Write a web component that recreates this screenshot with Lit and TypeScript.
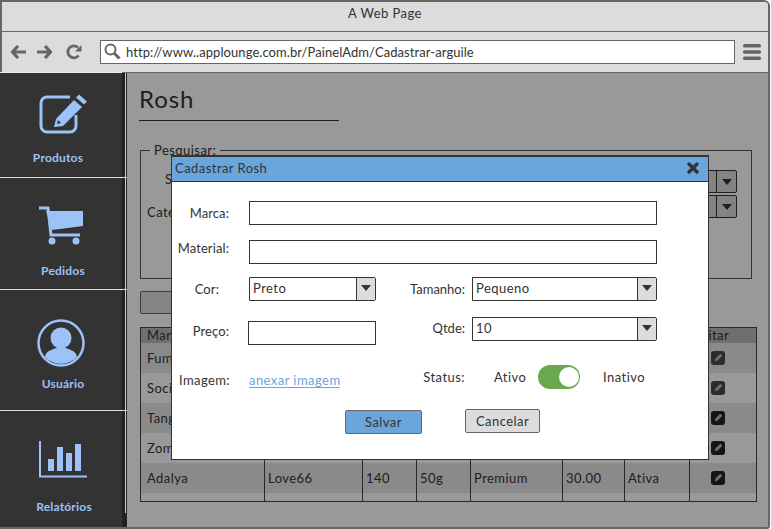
import { LitElement, css, html, svg } from 'lit';
import { customElement } from 'lit/decorators.js';

const pencilBadge = svg`<rect width="14" height="14" rx="3" fill="currentColor"/><path d="M9.300 2.800l2 2-4.800 4.800-2.700.7.700-2.700z" fill="#bbb"/>`;

const rows = [
  { marca: 'Fumari', essencia: 'Blue Mist', peso: '100', qtd: '50g', tipo: 'Premium', preco: '45.00', status: 'Ativa', soft: true, shade: true },
  { marca: 'Social Smoke', essencia: 'Lemon', peso: '100', qtd: '50g', tipo: 'Premium', preco: '40.00', status: 'Ativa', soft: true, shade: false },
  { marca: 'Tangiers', essencia: 'Cane Mint', peso: '250', qtd: '50g', tipo: 'Premium', preco: '50.00', status: 'Ativa', soft: false, shade: true },
  { marca: 'Zomo', essencia: 'Strong Mint', peso: '50', qtd: '50g', tipo: 'Nacional', preco: '15.00', status: 'Ativa', soft: false, shade: false },
  { marca: 'Adalya', essencia: 'Love66', peso: '140', qtd: '50g', tipo: 'Premium', preco: '30.00', status: 'Ativa', soft: false, shade: true },
];

@customElement('app-root')
export class AppRoot extends LitElement {
  static styles = css`
    :host {
      display: block;
      width: 771px;
      height: 529px;
      overflow: hidden;
      background: #fff;
      font-family: Lato, "Open Sans", sans-serif;
      font-size: 13px;
      letter-spacing: 0.45px;
      color: #333;
    }

    .window {
      position: relative;
      box-sizing: border-box;
      width: 770px;
      height: 529px;
      border: 2px solid #666;
      border-left: 0;
      border-radius: 0 6px 3px 0;
      display: flex;
      flex-direction: column;
      overflow: hidden;
    }

    .title {
      height: 30px;
      flex: none;
      box-sizing: border-box;
      background: #dcdcdc;
      border-bottom: 1px solid #666;
      border-left: 2px solid #666;
      display: flex;
      align-items: center;
      justify-content: center;
      padding-bottom: 7px;
    }

    .toolbar {
      height: 41px;
      flex: none;
      box-sizing: border-box;
      background: #dcdcdc;
      border-bottom: 1px solid #666;
      border-left: 2px solid #666;
      display: flex;
      align-items: center;
      padding: 0 7px 1px 9px;
    }
    .toolbar svg { display: block; color: #666; }
    .nav { display: flex; gap: 9px; align-items: center; }
    .reload { margin-left: 14px; }
    .url {
      margin-left: 18px;
      width: 635px;
      height: 24px;
      box-sizing: border-box;
      background: #fff;
      border: 1px solid #666;
      display: flex;
      align-items: center;
      gap: 5px;
      padding: 0 3px;
      white-space: nowrap;
      letter-spacing: 0.07px;
    }
    .menu { margin-left: 8px; }

    .body {
      position: relative;
      flex: 1;
      display: flex;
      min-height: 0;
    }

    .side {
      position: relative;
      width: 127px;
      flex: none;
      background: linear-gradient(to right, #333 122px, #222 122px);
      color: #9cc2f7;
      display: flex;
      flex-direction: column;
      font-weight: 700;
      font-size: 12px;
      letter-spacing: 0.2px;
    }
    .side::before {
      content: "";
      position: absolute;
      left: 0;
      top: -1px;
      width: 122px;
      height: 1px;
      background: #eee;
    }
    .side::after {
      content: "";
      position: absolute;
      left: 125px;
      top: 0;
      width: 1px;
      height: 440px;
      background: #ccc;
    }
    .item {
      box-sizing: border-box;
      border-bottom: 1px solid #ddd;
      display: flex;
      flex-direction: column;
      align-items: flex-start;
    }
    .item span { width: 122px; text-align: center; }
    .item svg { display: block; }
    .produtos { height: 105px; padding: 21px 0 0 39px; }
    .produtos span { margin: 16px 0 0 -42px; }
    .pedidos { height: 112px; padding: 28px 0 0 38px; }
    .pedidos span { margin: 17px 0 0 -36px; }
    .usuario { height: 121px; padding: 29px 0 0 37px; }
    .usuario span { margin: 9px 0 0 -35px; }
    .relatorios { flex: 1; border-bottom: 0; padding: 30px 0 0 39px; }
    .relatorios span { margin: 21px 0 0 -36px; }

    .main {
      position: relative;
      flex: 1;
      background: #fff;
      padding: 11px 11px 0 12px;
    }
    .main h1 {
      margin: 0;
      width: 200px;
      height: 36px;
      border-bottom: 1px solid #333;
      font-size: 24px;
      font-weight: 400;
      line-height: 29px;
      letter-spacing: 0.9px;
    }

    fieldset {
      margin: 23px 5px 0 1px;
      padding: 0 0 0 6px;
      height: 135px;
      box-sizing: border-box;
      border: 1px solid #555;
      position: relative;
    }
    legend { padding: 0 4px; margin-left: 3px; line-height: 13px; margin-top: -1px; }
    .filter { display: flex; align-items: center; height: 25px; }
    .filter.first { margin-top: 12px; padding-left: 18px; }
    .filter.first .name { margin-bottom: 5px; }
    .filter.second .name { margin-top: 11px; }
    .filter .grow { flex: 1; }
    .stub {
      width: 29px;
      height: 23px;
      margin-right: 14px;
      box-sizing: border-box;
      border: 1px solid #333;
      border-radius: 0 2px 2px 0;
      background: #dcdcdc;
      display: flex;
      justify-content: flex-end;
    }
    .stub i {
      width: 19px;
      border-left: 1px solid #333;
      display: flex;
      align-items: center;
      justify-content: center;
    }
    .caret {
      width: 0;
      height: 0;
      border: 5px solid transparent;
      border-top: 6px solid #333;
      border-bottom: 0;
    }

    .strip {
      width: 160px;
      height: 23px;
      margin: 12px 0 0 1px;
      box-sizing: border-box;
      background: #dcdcdc;
      border: 1px solid #666;
      border-radius: 2px;
    }

    .table {
      margin: 13px 0 0 1px;
      width: 617px;
      box-sizing: border-box;
      border: 1px solid #444;
    }
    .head {
      display: flex;
      height: 15px;
      background: #b9b9b9;
      align-items: center;
      line-height: 15px;
    }
    .tr { display: flex; height: 30px; align-items: center; }
    .tr.shade { background: #e6e6e6; }
    .cell {
      box-sizing: border-box;
      height: 100%;
      padding-left: 3px;
      border-left: 1px solid #444;
      display: flex;
      align-items: center;
      white-space: nowrap;
      overflow: hidden;
    }
    .head .cell { border-left: 0; }
    .cell:first-child { border-left: 0; padding-left: 6px; }
    .head .edit { padding-left: 4px; }
    .tr .edit { padding-left: 21px; }
    .edit svg { display: block; color: #222; }
    .edit.soft svg { color: #4a4a4a; }
    .tail { display: flex; height: 8px; }
    .c1 { width: 123px; }
    .c2 { width: 98px; }
    .c3 { width: 54px; }
    .c4 { width: 54px; }
    .c5 { width: 92px; }
    .c6 { width: 62px; }
    .c7 { width: 65px; }
    .c8 { flex: 1; }

    .dim {
      position: absolute;
      inset: 0;
      background: rgba(0, 0, 0, 0.4);
    }

    .modal {
      position: absolute;
      left: 171px;
      top: 82px;
      width: 538px;
      height: 305px;
      box-sizing: border-box;
      background: #fff;
      border: 1px solid #333;
      border-top-width: 2px;
    }
    .bar {
      height: 25px;
      box-sizing: border-box;
      background: #6aa5dc;
      border-bottom: 1px solid #333;
      display: flex;
      align-items: center;
      justify-content: space-between;
      padding: 0 9px 2px 3px;
    }
    .bar svg { display: block; color: #333; }

    .row { display: flex; align-items: center; height: 24px; }
    .r1 { margin-top: 19px; }
    .r2 { margin-top: 15px; }
    .r3 { margin-top: 13px; }
    .r4 { margin-top: 16px; height: 28px; align-items: flex-start; }
    .r5 { margin-top: 20px; }
    .r6 { margin-top: 20px; height: 25px; }

    .lab, .rlab { letter-spacing: 0.1px; white-space: nowrap; }
    .lab { width: 77px; box-sizing: border-box; text-align: right; padding-right: 20px; }
    .lab.up { margin-top: -8px; }
    .lab.cor { padding-right: 30px; }
    .lab.preco { width: 76px; padding-right: 19px; margin-top: 6px; }
    .lab.imagem { padding-right: 19px; margin-top: 6px; letter-spacing: 0.4px; }

    .input {
      box-sizing: border-box;
      height: 24px;
      border: 1px solid #333;
      background: #fff;
    }
    .wide { width: 408px; }
    .price { width: 128px; margin-top: 4px; }

    .select {
      box-sizing: border-box;
      height: 24px;
      border: 1px solid #333;
      border-radius: 0 2px 2px 0;
      background: #fff;
      display: flex;
      align-items: center;
      justify-content: space-between;
      padding-left: 3px;
    }
    .select span:first-child { margin-top: -2px; }
    .select i {
      width: 19px;
      height: 100%;
      box-sizing: border-box;
      background: #dcdcdc;
      border-left: 1px solid #333;
      display: flex;
      align-items: center;
      justify-content: center;
    }
    .s-cor { width: 127px; }
    .s-big { width: 185px; }

    .rlab { width: 96px; box-sizing: border-box; text-align: right; padding-right: 7px; letter-spacing: 0; }
    .rlab.qtde { margin-top: 3px; }

    .link {
      width: 91px;
      flex: none;
      white-space: nowrap;
      margin-top: 6px;
      color: #6aa5dc;
      border-bottom: 1px solid #6aa5dc;
      line-height: 14px;
      letter-spacing: 0.45px;
    }
    .status { width: 131px; flex: none; box-sizing: border-box; text-align: right; padding-right: 6px; }
    .ativo { margin-left: 23px; width: 44px; flex: none; }
    .toggle {
      width: 42px;
      height: 24px;
      flex: none;
      box-sizing: border-box;
      border-radius: 12px;
      background: #6aa84f;
      display: flex;
      justify-content: flex-end;
      padding: 2px 1px 2px 0;
    }
    .toggle b { width: 20px; height: 20px; border-radius: 50%; background: #fff; }
    .inativo { margin-left: 23px; }

    .btn {
      box-sizing: border-box;
      height: 24px;
      border: 1px solid #666;
      border-radius: 2px;
      display: flex;
      align-items: center;
      justify-content: center;
      background: #dcdcdc;
    }
    .save { width: 77px; margin: 1px 0 0 173px; background: #6aa5dc; }
    .cancel { width: 75px; margin: -1px 0 0 43px; }
  `;

  private caret() {
    return html`<span class="caret"></span>`;
  }

  render() {
    return html`
      <div class="window">
        <div class="title">A Web Page</div>
        <div class="toolbar">
          <div class="nav">
            <svg width="16" height="14" viewBox="0 0 16 14"><path d="M7 1L1.500 7 7 13M2 7h13" fill="none" stroke="currentColor" stroke-width="3.200"/></svg>
            <svg width="16" height="14" viewBox="0 0 16 14"><path d="M9 1l5.500 6L9 13M14 7H1" fill="none" stroke="currentColor" stroke-width="3.200"/></svg>
          </div>
          <svg class="reload" width="16" height="16" viewBox="0 0 16 16"><path d="M12.600 11.500A6 6 0 1 1 12 3.500" fill="none" stroke="currentColor" stroke-width="2.800"/><path d="M15.500 1v6.500H9z" fill="currentColor"/></svg>
          <div class="url">
            <svg width="17" height="17" viewBox="0 0 17 17"><circle cx="6.500" cy="6.500" r="5" fill="none" stroke="currentColor" stroke-width="2"/><path d="M10.500 10.500l5 5" stroke="currentColor" stroke-width="3"/></svg>
            http://www..applounge.com.br/PainelAdm/Cadastrar-arguile
          </div>
          <svg class="menu" width="18" height="16" viewBox="0 0 18 16"><rect width="18" height="3.500" y="0" rx="1.500" fill="currentColor"/><rect width="18" height="3.500" y="6.300" rx="1.500" fill="currentColor"/><rect width="18" height="3.500" y="12.500" rx="1.500" fill="currentColor"/></svg>
        </div>
        <div class="body">
          <nav class="side">
            <div class="item produtos">
              <svg width="50" height="40" viewBox="0 0 50 40">
                <path d="M31 3H8a6 6 0 0 0-6 6v23a6 6 0 0 0 6 6h23a6 6 0 0 0 6-6V21" fill="none" stroke="currentColor" stroke-width="3"/>
                <path d="M17 25l18-19 8 7-19 19-9 1z" fill="currentColor"/>
                <path d="M37 3.500l3-3 8 7-3 3z" fill="currentColor"/>
                <path d="M19 26l3 3-4 1z" fill="#333"/>
              </svg>
              <span>Produtos</span>
            </div>
            <div class="item pedidos">
              <svg width="47" height="40" viewBox="0 0 47 40">
                <path d="M1 2h9l3 27h29" fill="none" stroke="currentColor" stroke-width="3"/>
                <path d="M8 5H45V20L14 24z" fill="currentColor"/>
                <circle cx="14" cy="35" r="3.500" fill="currentColor"/>
                <circle cx="38" cy="35" r="3.500" fill="currentColor"/>
              </svg>
              <span>Pedidos</span>
            </div>
            <div class="item usuario">
              <svg width="48" height="48" viewBox="0 0 48 48">
                <circle cx="24" cy="24" r="22.500" fill="none" stroke="currentColor" stroke-width="2.500"/>
                <circle cx="24" cy="19" r="10.500" fill="currentColor"/>
                <path d="M8 38c1-6 6-7 11-9h10c5 2 10 3 11 9-9 9-23 9-32 0z" fill="currentColor"/>
              </svg>
              <span>Usuário</span>
            </div>
            <div class="item relatorios">
              <svg width="48" height="37" viewBox="0 0 48 37">
                <path d="M1 0v35.500h47" fill="none" stroke="currentColor" stroke-width="2"/>
                <rect x="9" y="18" width="6" height="12" fill="currentColor"/>
                <rect x="18" y="6" width="6" height="24" fill="currentColor"/>
                <rect x="27" y="12" width="6" height="18" fill="currentColor"/>
                <rect x="36" y="3" width="6" height="27" fill="currentColor"/>
              </svg>
              <span>Relatórios</span>
            </div>
          </nav>
          <main class="main">
            <h1>Rosh</h1>
            <fieldset>
              <legend>Pesquisar:</legend>
              <div class="filter first"><span class="name">Sabor:</span><span class="grow"></span><div class="stub"><i>${this.caret()}</i></div></div>
              <div class="filter second"><span class="name">Categoria:</span><span class="grow"></span><div class="stub"><i>${this.caret()}</i></div></div>
            </fieldset>
            <div class="strip"></div>
            <div class="table">
              <div class="head">
                <div class="cell c1">Marca</div><div class="cell c2">Essência</div><div class="cell c3">Peso</div><div class="cell c4">Qtde</div>
                <div class="cell c5">Tipo</div><div class="cell c6">Preço</div><div class="cell c7">Status</div><div class="cell c8 edit">Editar</div>
              </div>
              ${rows.map(
                r => html`<div class="tr ${r.shade ? 'shade' : ''}">
                  <div class="cell c1">${r.marca}</div><div class="cell c2">${r.essencia}</div><div class="cell c3">${r.peso}</div><div class="cell c4">${r.qtd}</div>
                  <div class="cell c5">${r.tipo}</div><div class="cell c6">${r.preco}</div><div class="cell c7">${r.status}</div>
                  <div class="cell c8 edit ${r.soft ? 'soft' : ''}"><svg width="14" height="14" viewBox="0 0 14 14">${pencilBadge}</svg></div>
                </div>`
              )}
              <div class="tail">
                <div class="cell c1"></div><div class="cell c2"></div><div class="cell c3"></div><div class="cell c4"></div>
                <div class="cell c5"></div><div class="cell c6"></div><div class="cell c7"></div><div class="cell c8"></div>
              </div>
            </div>
            <div class="dim"></div>
          </main>
          <section class="modal">
            <div class="bar">
              <span>Cadastrar Rosh</span>
              <svg width="12" height="12" viewBox="0 0 12 12"><path d="M2 2l8 8M10 2l-8 8" stroke="currentColor" stroke-width="3.400" stroke-linecap="round"/></svg>
            </div>
            <div class="row r1"><span class="lab">Marca:</span><div class="input wide"></div></div>
            <div class="row r2"><span class="lab up">Material:</span><div class="input wide"></div></div>
            <div class="row r3">
              <span class="lab cor">Cor:</span>
              <div class="select s-cor"><span>Preto</span><i>${this.caret()}</i></div>
              <span class="rlab">Tamanho:</span>
              <div class="select s-big"><span>Pequeno</span><i>${this.caret()}</i></div>
            </div>
            <div class="row r4">
              <span class="lab preco">Preço:</span>
              <div class="input price"></div>
              <span class="rlab qtde">Qtde:</span>
              <div class="select s-big"><span>10</span><i>${this.caret()}</i></div>
            </div>
            <div class="row r5">
              <span class="lab imagem">Imagem:</span>
              <span class="link">anexar imagem</span>
              <span class="status">Status:</span>
              <span class="ativo">Ativo</span>
              <div class="toggle"><b></b></div>
              <span class="inativo">Inativo</span>
            </div>
            <div class="row r6">
              <div class="btn save">Salvar</div>
              <div class="btn cancel">Cancelar</div>
            </div>
          </section>
        </div>
      </div>
    `;
  }
}

declare global {
  interface HTMLElementTagNameMap {
    'app-root': AppRoot;
  }
}
